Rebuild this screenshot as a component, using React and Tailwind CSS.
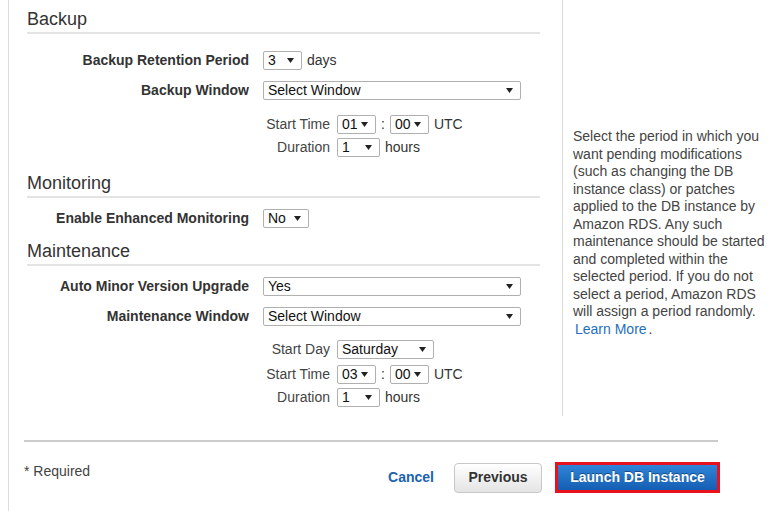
import React from "react";

function Arrow() {
    return (
        <svg width="7" height="5" viewBox="0 0 7 5" className="shrink-0">
            <path d="M0 0 L7 0 L3.5 5 Z" fill="#222" />
        </svg>
    );
}

function Select({ value, width }) {
    return (
        <div
            className="h-[19px] border border-[#b0b0b0] rounded-[2px] bg-white flex items-center justify-between pl-[4px] pr-[7px] text-[14px] leading-[17px] text-[#111] shrink-0"
            style={{ width }}
        >
            <span>{value}</span>
            <Arrow />
        </div>
    );
}

function Heading({ children, className = "" }) {
    return (
        <div className={"text-[18px] leading-[22px] text-[#333] pb-[2px] border-b-2 border-[#e4e4e4] " + className}>
            {children}
        </div>
    );
}

function Row({ label, children, className = "" }) {
    return (
        <div className={"flex items-center h-[19px] " + className}>
            <div className="w-[222px] text-right font-bold text-[14px] text-[#333] shrink-0">{label}</div>
            <div className="ml-[14px] flex items-center gap-[5px] text-[14px] text-[#333]">{children}</div>
        </div>
    );
}

function SubRow({ label, children, className = "" }) {
    return (
        <div className={"flex items-center h-[19px] " + className}>
            <div className="w-[236px] shrink-0" />
            <div className="w-[67px] text-right text-[14px] text-[#444] shrink-0">{label}</div>
            <div className="ml-[7px] flex items-center text-[14px] text-[#333]">{children}</div>
        </div>
    );
}

function TimeRow({ label, hour, className }) {
    return (
        <SubRow label={label} className={className}>
            <Select value={hour} width={39} />
            <span className="mx-[5px]">:</span>
            <Select value="00" width={39} />
            <span className="ml-[5px]">UTC</span>
        </SubRow>
    );
}

function DurationRow({ className }) {
    return (
        <SubRow label="Duration" className={className}>
            <Select value="1" width={43} />
            <span className="ml-[5px]">hours</span>
        </SubRow>
    );
}

export default function App() {
    return (
        <div className="w-[780px] h-[511px] bg-white overflow-hidden" style={{ fontFamily: '"Liberation Sans", Arial, sans-serif' }}>
            <div className="ml-[8px] h-full border-l border-[#dcdcdc]">
                <div className="flex h-[416px]">
                    <div className="w-[553px] pl-[18px] pr-[22px]">
                        <Heading className="pt-[8px]">Backup</Heading>
                        <Row label="Backup Retention Period" className="mt-[17px]">
                            <Select value="3" width={39} />
                            <span>days</span>
                        </Row>
                        <Row label="Backup Window" className="mt-[11px]">
                            <Select value="Select Window" width={258} />
                        </Row>
                        <TimeRow label="Start Time" hour="01" className="mt-[15px]" />
                        <DurationRow className="mt-[4px]" />

                        <Heading className="mt-[15px]">Monitoring</Heading>
                        <Row label="Enable Enhanced Monitoring" className="mt-[11px]">
                            <Select value="No" width={46} />
                        </Row>

                        <Heading className="mt-[12px]">Maintenance</Heading>
                        <Row label="Auto Minor Version Upgrade" className="mt-[11px]">
                            <Select value="Yes" width={258} />
                        </Row>
                        <Row label="Maintenance Window" className="mt-[11px]">
                            <Select value="Select Window" width={258} />
                        </Row>
                        <SubRow label="Start Day" className="mt-[14px]">
                            <Select value="Saturday" width={97} />
                        </SubRow>
                        <TimeRow label="Start Time" hour="03" className="mt-[6px]" />
                        <DurationRow className="mt-[4px]" />
                    </div>
                    <div className="border-l border-[#dcdcdc] pl-[10px] pt-[128px]">
                        <p className="w-[196px] text-[14px] leading-[17.5px] text-[#444]">
                            Select the period in which you want pending modifications (such as changing the DB instance class) or patches applied to the DB instance by Amazon RDS. Any such maintenance should be started and completed within the selected period. If you do not select a period, Amazon RDS will assign a period randomly.{" "}
                            <a href="#" className="text-[#1f6fc0] ml-[2px]">Learn More</a>
                            <span className="ml-[2px]">.</span>
                        </p>
                    </div>
                </div>

                <div className="ml-[15px] mt-[24px] w-[694px] border-t-2 border-[#cccccc]" />

                <div className="ml-[15px] mt-[20px] w-[696px] flex items-start">
                    <div className="mt-[1px] text-[14px] leading-[16px] text-[#444]">* Required</div>
                    <div className="ml-auto flex items-center">
                        <a href="#" className="font-bold text-[14px] text-[#1a62b0]">Cancel</a>
                        <button className="ml-[20px] w-[88px] h-[30px] rounded-[4px] border border-[#c8c8c8] bg-gradient-to-b from-[#ffffff] to-[#e4e4e4] font-bold text-[14px] text-[#333]">
                            Previous
                        </button>
                        <div className="ml-[13px] w-[165px] h-[31px] border-[3px] border-[#e8121e] bg-white">
                            <button className="w-full h-full bg-gradient-to-b from-[#2f85d8] to-[#145eb3] font-bold text-[14px] text-white [text-shadow:0_-1px_0_rgba(0,0,0,0.4)]">
                                Launch DB Instance
                            </button>
                        </div>
                    </div>
                </div>
            </div>
        </div>
    );
}
